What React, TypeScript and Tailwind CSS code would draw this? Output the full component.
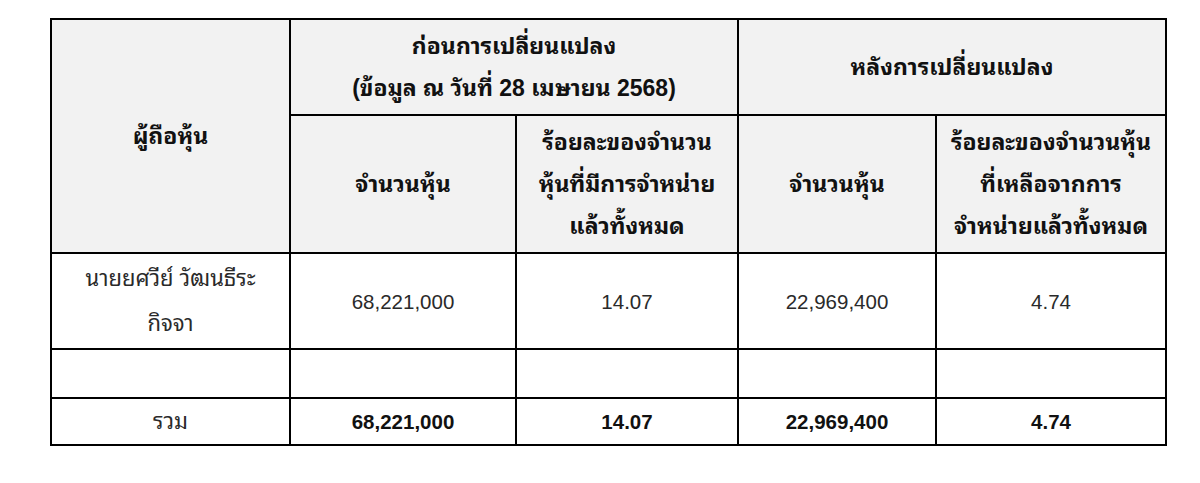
import React from "react";

const font = { fontFamily: "'Liberation Sans', 'Noto Sans Thai Looped', 'Noto Sans Thai', Tahoma, sans-serif" };

export default function App() {
  const th = "border-2 border-black bg-[#f2f2f2] font-bold text-center align-middle px-1 leading-[42px] text-[23px] text-[#111]";
  const td = "border-2 border-black bg-white text-center align-middle px-2 leading-[45px] text-[#2a2a2a]";
  const num = td + " text-[20.5px]";
  const tot = "border-2 border-black bg-white text-center align-middle px-2 leading-[40px] font-bold text-[#111] text-[20.5px]";
  return (
    <div className="w-[1200px] h-[483px] bg-white pt-[18px] pl-[50px]" style={font}>
      <table className="table-fixed border-collapse w-[1116px]">
        <colgroup>
          <col className="w-[239px]" />
          <col className="w-[226px]" />
          <col className="w-[222px]" />
          <col className="w-[198px]" />
          <col className="w-[230px]" />
        </colgroup>
        <thead>
          <tr className="h-[96px]">
            <th rowSpan={2} className={th}>ผู้ถือหุ้น</th>
            <th colSpan={2} className={th}>
              ก่อนการเปลี่ยนแปลง
              <br />
              (ข้อมูล ณ วันที่ 28 เมษายน 2568)
            </th>
            <th colSpan={2} className={th}>หลังการเปลี่ยนแปลง</th>
          </tr>
          <tr className="h-[138px]">
            <th className={th}>จำนวนหุ้น</th>
            <th className={th}>
              ร้อยละของจำนวน
              <br />
              หุ้นที่มีการจำหน่าย
              <br />
              แล้วทั้งหมด
            </th>
            <th className={th}>จำนวนหุ้น</th>
            <th className={th + " px-0"}>
              ร้อยละของจำนวนหุ้น
              <br />
              ที่เหลือจากการ
              <br />
              จำหน่ายแล้วทั้งหมด
            </th>
          </tr>
        </thead>
        <tbody>
          <tr className="h-[96px]">
            <td className={td + " text-[22px]"}>
              นายยศวีย์ วัฒนธีระ
              <br />
              กิจจา
            </td>
            <td className={num}>68,221,000</td>
            <td className={num}>14.07</td>
            <td className={num}>22,969,400</td>
            <td className={num}>4.74</td>
          </tr>
          <tr className="h-[49px]">
            <td className={td}></td>
            <td className={td}></td>
            <td className={td}></td>
            <td className={td}></td>
            <td className={td}></td>
          </tr>
          <tr className="h-[47px]">
            <td className={td + " leading-[40px] text-[22px]"}>รวม</td>
            <td className={tot}>68,221,000</td>
            <td className={tot}>14.07</td>
            <td className={tot}>22,969,400</td>
            <td className={tot}>4.74</td>
          </tr>
        </tbody>
      </table>
    </div>
  );
}
